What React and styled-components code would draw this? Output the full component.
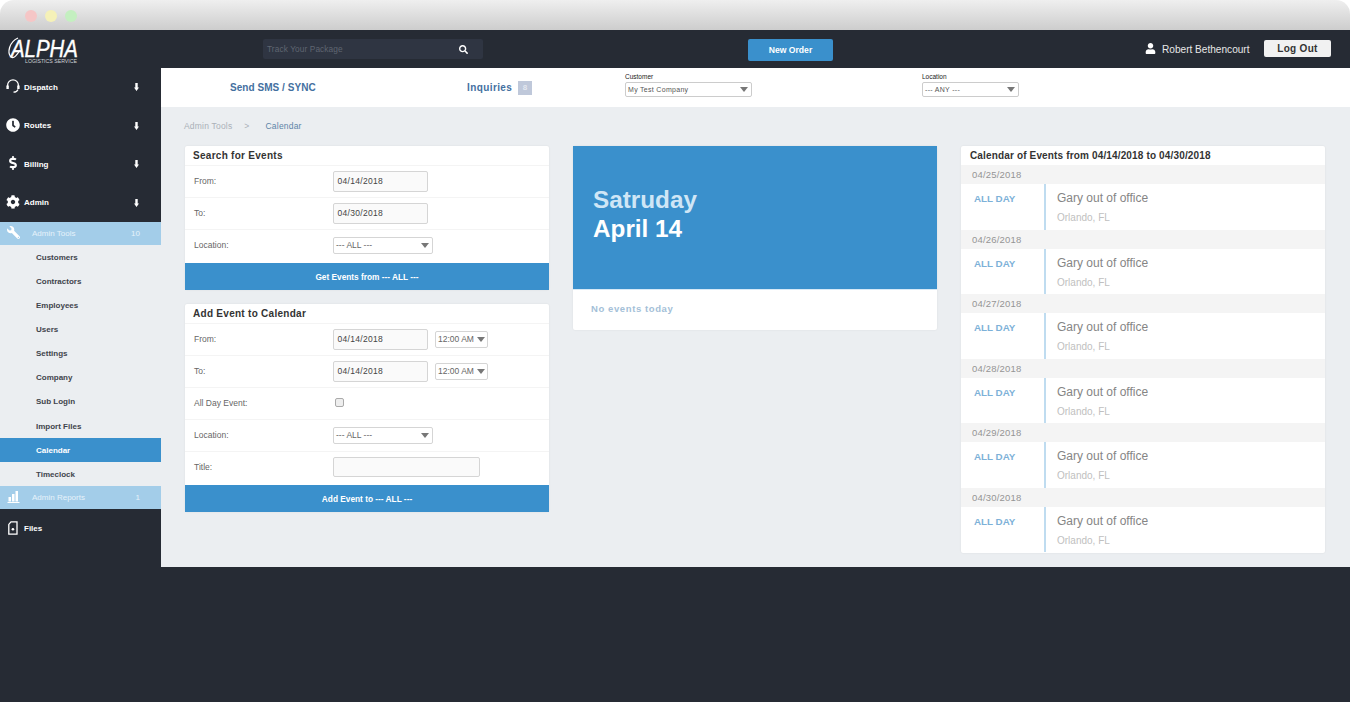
import React from 'react'
import styled, { createGlobalStyle } from 'styled-components'
import { FaClock, FaDollarSign, FaCog, FaWrench, FaUser, FaSearch } from 'react-icons/fa'

const GlobalStyle = createGlobalStyle`
  html, body {
    margin: 0;
    padding: 0;
    height: 702px;
    overflow: hidden;
    background: #262b34;
    font-family: "Liberation Sans", Arial, sans-serif;
  }
  * { box-sizing: border-box; }
`

const Page = styled.div`
  width: 1350px;
  height: 702px;
  background: #262b34;
`

const WindowFrame = styled.div`
  background: #fff;
`

const WindowBar = styled.div`
  height: 30px;
  padding: 10px 0 0 25px;
  display: flex;
  gap: 8px;
  background: linear-gradient(#efefef, #cdcdcd);
  border-radius: 14px 14px 0 0;
`

const Dot = styled.span`
  width: 12px;
  height: 12px;
  border-radius: 50%;
  background: ${p => p.$color};
`

const TopBar = styled.header`
  height: 38px;
  display: flex;
  align-items: center;
  background: #262b34;
`

const LogoBox = styled.div`
  width: 263px;
  height: 32px;
  padding-left: 7px;
  flex: none;
  svg { display: block; overflow: visible; }
`

const SearchBox = styled.div`
  width: 220px;
  height: 20px;
  flex: none;
  display: flex;
  align-items: center;
  justify-content: space-between;
  padding: 0 15px 0 4px;
  background: #2f3542;
  border-radius: 2px;
  color: #5f6571;
  font-size: 8.3px;
  letter-spacing: 0.1px;
  svg { color: #fff; font-size: 9px; }
`

const NewOrder = styled.button`
  width: 85px;
  height: 22px;
  margin: 2px 0 0 265px;
  flex: none;
  border: 0;
  border-radius: 2px;
  background: #3a90cc;
  color: #fff;
  font: bold 8.6px "Liberation Sans", sans-serif;
`

const UserName = styled.div`
  margin-left: 312px;
  width: 119px;
  flex: none;
  display: flex;
  align-items: center;
  gap: 6px;
  color: #e8e8e8;
  font-size: 10.1px;
  svg { font-size: 11px; color: #fff; margin-top: -2px; }
`

const LogOut = styled.button`
  width: 67px;
  height: 17px;
  margin-top: -2px;
  flex: none;
  border: 0;
  border-radius: 2px;
  background: #f1f1f1;
  color: #333;
  font: bold 10px "Liberation Sans", sans-serif;
  letter-spacing: 0.3px;
`

const Body = styled.div`
  display: flex;
  height: 499px;
`

const Sidebar = styled.nav`
  width: 161px;
  flex: none;
  background: #262b34;
  display: flex;
  flex-direction: column;
`

const MainItem = styled.div`
  height: 38.5px;
  flex: none;
  display: flex;
  align-items: center;
  padding: 0.4px 22px 0 6px;
  color: #fff;
  font-size: 8px;
  font-weight: bold;
  svg.main { width: 14px; height: 14px; margin: -2px 4px 0 0; flex: none; }
  span { flex: 1; }
  svg.arrow { width: 5px; height: 8px; }
`

const SubHead = styled.div`
  height: 23px;
  flex: none;
  display: flex;
  align-items: center;
  padding: 0 21px 0 7px;
  background: #a3cde9;
  color: #e6f2fa;
  font-size: 8px;
  svg { width: 13px; height: 13px; flex: none; color: #fff; margin-top: -2px; }
  svg.flip { transform: scaleX(-1); }
  span { flex: 1; padding-left: 12px; }
`

const SubList = styled.div`
  background: #ebeef1;
  display: flex;
  flex-direction: column;
`

const SubItem = styled.div`
  height: 24.15px;
  display: flex;
  align-items: center;
  padding-left: 36px;
  font-size: 8px;
  font-weight: bold;
  color: ${p => (p.$active ? '#fff' : '#3f444c')};
  background: ${p => (p.$active ? '#3a90cc' : 'transparent')};
`

const Main = styled.main`
  flex: 1;
  background: #ebeef1;
  display: flex;
  flex-direction: column;
`

const SubBar = styled.div`
  height: 39px;
  flex: none;
  background: #fff;
  display: flex;
  align-items: center;
`

const SubLink = styled.div`
  flex: none;
  width: ${p => p.$width}px;
  padding-left: ${p => p.$left}px;
  color: #44709f;
  font-size: 10px;
  font-weight: bold;
  letter-spacing: ${p => (p.$tight ? '0.05px' : '0.4px')};
  display: flex;
  align-items: center;
  gap: 6px;
`

const Count = styled.span`
  width: 14px;
  height: 14px;
  background: #bfc8da;
  color: #e3e7ef;
  font-size: 8px;
  display: flex;
  align-items: center;
  justify-content: center;
`

const TopField = styled.div`
  flex: none;
  width: ${p => p.$width}px;
  margin-top: -5.5px;
  color: #222;
  font-size: 6.5px;
  line-height: 7px;
`

const TopSelect = styled.div`
  width: ${p => p.$width}px;
  height: 14.5px;
  margin-top: 2px;
  padding: 0 3.5px 0 2px;
  border: 1px solid #ccc;
  border-radius: 2px;
  background: #fff;
  color: #555;
  font-size: 7px;
  letter-spacing: 0.3px;
  display: flex;
  align-items: center;
  justify-content: space-between;
`

const Caret = styled.i`
  width: 0;
  height: 0;
  border-left: 4px solid transparent;
  border-right: 4px solid transparent;
  border-top: 5px solid #777;
`

const Breadcrumb = styled.div`
  height: 39px;
  flex: none;
  padding: 14px 0 0 23px;
  display: flex;
  gap: 12px;
  font-size: 8.5px;
  letter-spacing: 0.2px;
  color: #aab0b8;
  b { font-weight: normal; color: #5d84a8; margin-left: 4px; }
`

const Columns = styled.div`
  display: flex;
  padding-left: 24px;
  align-items: flex-start;
`

const LeftColumn = styled.div`
  width: 364px;
  flex: none;
  display: flex;
  flex-direction: column;
  gap: 14px;
`

const Card = styled.section`
  background: #fff;
  border-radius: 2px;
  box-shadow: 0 0 2px rgba(0, 0, 0, 0.08);
`

const CardTitle = styled.h3`
  margin: 0;
  height: 19px;
  padding-left: 8px;
  display: flex;
  align-items: center;
  color: #333;
  font-size: 10px;
  font-weight: bold;
  letter-spacing: 0.28px;
  white-space: nowrap;
`

const EventsTitle = styled(CardTitle)`
  padding-left: 9px;
  letter-spacing: 0.15px;
`

const Row = styled.div`
  height: 32px;
  display: flex;
  align-items: center;
  gap: 7px;
  padding: 0 0 1px 148px;
  position: relative;
  border-top: 1px solid #f4f4f4;
`

const RowLabel = styled.label`
  position: absolute;
  left: 9px;
  color: #666;
  font-size: 8.5px;
`

const DateInput = styled.div`
  width: ${p => p.$width || 95}px;
  height: ${p => (p.$width ? 20 : 21)}px;
  padding-left: 3.5px;
  border: 1px solid #d5d5d5;
  border-radius: 2px;
  background: #fafafa;
  color: #444;
  font-size: 8.5px;
  letter-spacing: 0.3px;
  display: flex;
  align-items: center;
`

const PickBox = styled.div`
  width: ${p => p.$width}px;
  height: 17px;
  padding: 0 ${p => p.$caretGap}px 0 2px;
  border: 1px solid #d5d5d5;
  border-radius: 2px;
  background: #fff;
  color: #666;
  font-size: 8.5px;
  display: flex;
  align-items: center;
  justify-content: space-between;
`

const CheckBox = styled.span`
  width: 9px;
  height: 9px;
  margin: -2px 0 0 2px;
  border: 1px solid #aaa;
  border-radius: 2px;
  background: #eee;
`

const ActionButton = styled.div`
  height: 27px;
  margin-top: 2px;
  background: #3a90cc;
  color: #fff;
  font-size: 8.3px;
  font-weight: bold;
  display: flex;
  align-items: center;
  justify-content: center;
`

const DayCard = styled(Card)`
  width: 364px;
  flex: none;
  margin-left: 24px;
`

const DayHero = styled.div`
  height: 143px;
  padding: 39px 0 0 20px;
  background: #3a90cc;
  font-size: 24.3px;
  font-weight: bold;
  line-height: 29px;
  color: #fff;
  span { display: block; color: #cfe6f6; }
`

const NoEvents = styled.div`
  height: 41px;
  padding: 13px 0 0 18px;
  border-top: 1px solid #d6e9f6;
  color: #a4bfd8;
  font-size: 9.5px;
  font-weight: bold;
  letter-spacing: 0.6px;
`

const EventsCard = styled(Card)`
  width: 364px;
  flex: none;
  margin-left: 24px;
  padding-bottom: 1px;
`

const DateRow = styled.div`
  height: 19px;
  padding: 0.5px 0 0 11px;
  display: flex;
  align-items: center;
  background: #f4f4f4;
  color: #959595;
  font-size: 9.5px;
  letter-spacing: 0.2px;
`

const EventRow = styled.div`
  height: 45.5px;
  display: flex;
  align-items: stretch;
`

const AllDay = styled.div`
  width: 85px;
  flex: none;
  padding: 9px 0 0 13px;
  border-right: 2px solid #bfdcf0;
  color: #7db1d8;
  font-size: 9.8px;
  font-weight: bold;
`

const EventText = styled.div`
  padding: 7px 0 0 11px;
  color: #858585;
  font-size: 12px;
  small { display: block; margin-top: 7px; color: #c0c0c0; font-size: 10px; }
`

const Logo = () => (
  <svg width="76" height="32" viewBox="0 0 76 32">
    <path d="M11 5 C2 9 0 20 4 24 C7 26 10 22 13 17" fill="none" stroke="#fff" strokeWidth="1.3" />
    <text x="4" y="23.5" fill="#fff" stroke="#fff" strokeWidth="0.4" fontFamily="Liberation Sans" fontSize="23" fontStyle="italic" textLength="67" lengthAdjust="spacingAndGlyphs">ALPHA</text>
    <text x="18" y="29.5" fill="#cfd2d6" fontFamily="Liberation Sans" fontSize="5.5" textLength="52" lengthAdjust="spacingAndGlyphs">LOGISTICS SERVICE</text>
  </svg>
)

const HeadsetIcon = () => (
  <svg className="main" viewBox="0 0 14 14" fill="none" stroke="#fff" strokeWidth="1.3">
    <path d="M1.6 8 V6.2 a5.4 5.4 0 0 1 10.8 0 V8" />
    <path d="M1.6 6.5 V10" strokeWidth="2.4" />
    <path d="M12.4 6.5 V10" strokeWidth="2.4" />
    <path d="M12 10.5 Q11 13.2 7.5 13.2" />
  </svg>
)

const DownArrow = () => (
  <svg className="arrow" viewBox="0 0 5 8" fill="#fff">
    <path d="M1.3 0 H3.7 V4.6 H5 L2.5 8 L0 4.6 H1.3 Z" />
  </svg>
)

const BarsIcon = () => (
  <svg viewBox="0 0 13 13" fill="#fff">
    <rect x="1.5" y="7" width="2.5" height="4.5" />
    <rect x="5" y="4" width="2.5" height="7.5" />
    <rect x="8.5" y="1" width="2.5" height="10.5" />
    <rect x="0.5" y="12" width="12" height="1" />
  </svg>
)

const FileIcon = () => (
  <svg className="main" viewBox="0 0 14 14" fill="none" stroke="#fff" strokeWidth="1.3">
    <path d="M5 0.8 H11 V13.2 H2.8 V3.4 Z" />
    <circle cx="6.9" cy="8.2" r="1.3" fill="#fff" stroke="none" />
  </svg>
)

const mainItems = [
  ['Dispatch', <HeadsetIcon />],
  ['Routes', <FaClock className="main" />],
  ['Billing', <FaDollarSign className="main" />],
  ['Admin', <FaCog className="main" />],
]

const adminLinks = ['Customers', 'Contractors', 'Employees', 'Users', 'Settings', 'Company', 'Sub Login', 'Import Files', 'Calendar', 'Timeclock']
const eventDates = ['04/25/2018', '04/26/2018', '04/27/2018', '04/28/2018', '04/29/2018', '04/30/2018']

export default function App() {
  return (
    <Page>
      <GlobalStyle />
      <WindowFrame>
        <WindowBar>
          <Dot $color="#f5c6c6" />
          <Dot $color="#f5f1b8" />
          <Dot $color="#c4efc0" />
        </WindowBar>
      </WindowFrame>
      <TopBar>
        <LogoBox><Logo /></LogoBox>
        <SearchBox>Track Your Package<FaSearch /></SearchBox>
        <NewOrder>New Order</NewOrder>
        <UserName><FaUser />Robert Bethencourt</UserName>
        <LogOut>Log Out</LogOut>
      </TopBar>
      <Body>
        <Sidebar>
          {mainItems.map(([label, icon]) => (
            <MainItem key={label}>
              {icon}
              <span>{label}</span>
              <DownArrow />
            </MainItem>
          ))}
          <SubHead><FaWrench className="flip" /><span>Admin Tools</span>10</SubHead>
          <SubList>
            {adminLinks.map(link => (
              <SubItem key={link} $active={link === 'Calendar'}>{link}</SubItem>
            ))}
          </SubList>
          <SubHead><BarsIcon /><span>Admin Reports</span>1</SubHead>
          <MainItem><FileIcon /><span>Files</span></MainItem>
        </Sidebar>
        <Main>
          <SubBar>
            <SubLink $width={233} $left={69} $tight>Send SMS / SYNC</SubLink>
            <SubLink $width={231} $left={73}>Inquiries <Count>8</Count></SubLink>
            <TopField $width={297}>
              Customer
              <TopSelect $width={127}>My Test Company<Caret /></TopSelect>
            </TopField>
            <TopField $width={110}>
              Location
              <TopSelect $width={97}>--- ANY ---<Caret /></TopSelect>
            </TopField>
          </SubBar>
          <Breadcrumb>Admin Tools<span>&gt;</span><b>Calendar</b></Breadcrumb>
          <Columns>
            <LeftColumn>
              <Card>
                <CardTitle>Search for Events</CardTitle>
                <Row><RowLabel>From:</RowLabel><DateInput>04/14/2018</DateInput></Row>
                <Row><RowLabel>To:</RowLabel><DateInput>04/30/2018</DateInput></Row>
                <Row><RowLabel>Location:</RowLabel><PickBox $width={100} $caretGap={3}>--- ALL ---<Caret /></PickBox></Row>
                <ActionButton>Get Events from --- ALL ---</ActionButton>
              </Card>
              <Card>
                <CardTitle>Add Event to Calendar</CardTitle>
                <Row><RowLabel>From:</RowLabel><DateInput>04/14/2018</DateInput><PickBox $width={53} $caretGap={2}>12:00 AM<Caret /></PickBox></Row>
                <Row><RowLabel>To:</RowLabel><DateInput>04/14/2018</DateInput><PickBox $width={53} $caretGap={2}>12:00 AM<Caret /></PickBox></Row>
                <Row><RowLabel>All Day Event:</RowLabel><CheckBox /></Row>
                <Row><RowLabel>Location:</RowLabel><PickBox $width={100} $caretGap={3}>--- ALL ---<Caret /></PickBox></Row>
                <Row><RowLabel>Title:</RowLabel><DateInput $width={147} /></Row>
                <ActionButton>Add Event to --- ALL ---</ActionButton>
              </Card>
            </LeftColumn>
            <DayCard>
              <DayHero><span>Satruday</span>April 14</DayHero>
              <NoEvents>No events today</NoEvents>
            </DayCard>
            <EventsCard>
              <EventsTitle>Calendar of Events from 04/14/2018 to 04/30/2018</EventsTitle>
              {eventDates.map(date => (
                <React.Fragment key={date}>
                  <DateRow>{date}</DateRow>
                  <EventRow>
                    <AllDay>ALL DAY</AllDay>
                    <EventText>Gary out of office<small>Orlando, FL</small></EventText>
                  </EventRow>
                </React.Fragment>
              ))}
            </EventsCard>
          </Columns>
        </Main>
      </Body>
    </Page>
  )
}
